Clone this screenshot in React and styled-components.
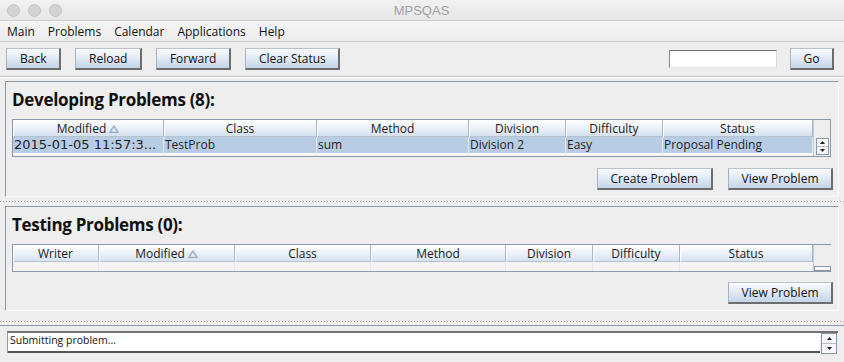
import styled, { createGlobalStyle } from "styled-components";

const Global = createGlobalStyle`
  html, body {
    margin: 0;
    padding: 0;
    background: #eeeeee;
  }
  body {
    font-family: "Open Sans", "DejaVu Sans", sans-serif;
    font-size: 12px;
    color: #1a1a1a;
  }
`;

const Window = styled.div`
  width: 844px;
  height: 362px;
  display: flex;
  flex-direction: column;
  background: #eeeeee;
  overflow: hidden;
`;

const TitleBar = styled.div`
  height: 20px;
  flex: none;
  display: grid;
  grid-template-columns: 1fr auto 1fr;
  align-items: center;
  padding: 0 8px 0 7px;
  background: linear-gradient(#f2f2f2, #e6e6e6);
  border-bottom: 1px solid #cdcdcd;
`;

const Lights = styled.div`
  display: flex;
  gap: 8px;
`;

const Light = styled.span`
  width: 11px;
  height: 11px;
  border-radius: 50%;
  background: #d3d3d3;
  border: 1px solid #c4c4c4;
`;

const Title = styled.div`
  font-family: "Liberation Sans", Arial, sans-serif;
  font-size: 13px;
  color: #a2a2a2;
`;

const MenuBar = styled.div`
  height: 20px;
  flex: none;
  display: flex;
  align-items: center;
  gap: 13px;
  padding-left: 7px;
  background: linear-gradient(#f5f5f5, #ebebeb);
  border-bottom: 1px solid #c9c9c9;
`;

const MenuItem = styled.span`
  font-size: 12px;
  color: #111;
`;

const ToolBar = styled.div`
  flex: none;
  display: flex;
  align-items: center;
  gap: 14px;
  padding: 6px 10px 6px 6px;
  border-bottom: 1px solid #c4c4c4;
  box-shadow: 0 1px 0 #ffffff;
  margin-bottom: 1px;
`;

const Spacer = styled.div`
  flex: 1;
`;

const Button = styled.button`
  height: 22px;
  box-sizing: border-box;
  padding: 0 12.5px 0 13px;
  font-family: "Open Sans", "DejaVu Sans", sans-serif;
  font-size: 12px;
  color: #111;
  background: linear-gradient(#fbfcfe, #dde7f3 55%, #c3d5ea);
  border-top: 1px solid #b9c2cc;
  border-left: 1px solid #aab3bd;
  border-right: 2px solid #6d6d6d;
  border-bottom: 2px solid #6d6d6d;
  border-radius: 0;
  line-height: 18px;
  white-space: nowrap;
`;

const TextField = styled.div`
  width: 108px;
  height: 18px;
  box-sizing: border-box;
  background: #ffffff;
  border-top: 1px solid #6f6f6f;
  border-left: 1px solid #8a8a8a;
  border-right: 1px solid #d8d8d8;
  border-bottom: 1px solid #e2e2e2;
  margin-right: -1px;
`;

const Content = styled.div`
  flex: 1;
  display: flex;
  flex-direction: column;
  padding: 3px 5px 0 5px;
`;

const Panel = styled.section`
  display: flex;
  flex-direction: column;
  padding: 8px 6px 6px 6px;
  border-top: 1px solid #8e99a8;
  border-left: 1px solid #8e99a8;
  border-right: 1px solid #ffffff;
  border-bottom: 1px solid #ffffff;
`;

const Heading = styled.h2`
  margin: 0 0 9px 0;
  height: 20px;
  line-height: 20px;
  font-size: 17px;
  font-weight: 700;
  letter-spacing: -0.3px;
  color: #111;
`;

const TableFrame = styled.div`
  margin-right: 1px;
  display: grid;
  grid-template-columns: ${(p) => p.$cols} 1fr;
  border: 1px solid #8d99a9;
  background: #eeeeee;
`;

const HeadCell = styled.div`
  height: 17px;
  box-sizing: border-box;
  display: flex;
  align-items: center;
  justify-content: center;
  gap: 3px;
  font-size: 12px;
  color: #1a1a1a;
  background: linear-gradient(#ffffff, #e6edf6 60%, #d3dfed);
  border-right: 1px solid #a9b5c3;
  box-shadow: inset 1px 0 0 #ffffff, inset 0 -1px 0 #b7c3d1;
`;

const Corner = styled.div`
  height: 17px;
  background: #eeeeee;
  border-left: 1px solid #c5ccd5;
`;

const BodyCell = styled.div`
  height: ${(p) => p.$h}px;
  box-sizing: border-box;
  padding: 0 1px;
  line-height: 16px;
  font-family: ${(p) =>
    p.$wide ? '"DejaVu Sans", sans-serif' : '"Open Sans", "DejaVu Sans", sans-serif'};
  font-size: ${(p) => (p.$wide ? "13px" : "12px")};
  color: #1e1e1e;
  white-space: nowrap;
  overflow: hidden;
  background: ${(p) => (p.$selected ? "#b8cde4" : "#f4f4f4")};
  border-right: 1px solid #e4e9f0;
  border-bottom: ${(p) => (p.$selected ? "1px solid #ffffff" : "0")};
`;

const ScrollCol = styled.div`
  grid-row: span ${(p) => p.$rows};
  display: flex;
  flex-direction: column;
  align-items: center;
  justify-content: ${(p) => (p.$end ? "flex-end" : "flex-start")};
  padding-top: ${(p) => (p.$end ? 0 : 1)}px;
  background: #eeeeee;
  border-left: 1px solid #c5ccd5;
`;

const SpinBox = styled.div`
  display: flex;
  flex-direction: column;
  width: ${(p) => p.$w}px;
  border: 1px solid #8e99a8;
  background: #f4f6f9;
`;

const SpinBtn = styled.div`
  height: ${(p) => p.$h}px;
  display: flex;
  align-items: center;
  justify-content: center;
  & + & {
    border-top: 1px solid #b8c1cc;
  }
`;

const Actions = styled.div`
  display: flex;
  justify-content: flex-end;
  gap: 15px;
  margin-top: ${(p) => p.$top}px;
  margin-right: -1px;
`;

const Divider = styled.div`
  flex: none;
  height: ${(p) => p.$h}px;
  display: flex;
  flex-direction: column;
  justify-content: ${(p) => (p.$end ? "flex-end" : "center")};
  padding-bottom: ${(p) => (p.$end ? 3 : 0)}px;
  box-sizing: border-box;
  margin: 0 -5px;
  &::before {
    content: "";
    height: 1px;
    background: repeating-linear-gradient(90deg, #9c9c9c 0 1px, transparent 1px 3px);
  }
`;

const StatusPane = styled.div`
  margin: 0 -5px;
  padding: 5px 6px 0 7px;
  border-top: 1px solid #8e99a8;
  display: flex;
`;

const StatusArea = styled.div`
  flex: 1;
  height: 22px;
  box-sizing: border-box;
  display: flex;
  background: #ffffff;
  border-top: 2px solid #727272;
  border-left: 1px solid #9a9a9a;
`;

const StatusText = styled.div`
  flex: 1;
  padding-left: 2px;
  font-size: 10.5px;
  line-height: 15px;
  color: #111;
  border-bottom: 2px solid #555555;
`;

const StatusSpin = styled.div`
  width: 18px;
  display: flex;
  align-items: flex-start;
  justify-content: center;
  background: #eeeeee;
`;

function SortArrow() {
  return (
    <svg width="10" height="8" viewBox="0 0 10 8">
      <polygon points="5,0.5 9.5,7.5 0.5,7.5" fill="#b9cadf" stroke="#8fa3bd" strokeWidth="1" />
      <polygon points="5,3 7.2,6.5 2.8,6.5" fill="#e9f0f8" />
    </svg>
  );
}

function Arrow({ up }) {
  return (
    <svg width="5" height="3" viewBox="0 0 5 3">
      <polygon points={up ? "2.5,0 5,3 0,3" : "0,0 5,0 2.5,3"} fill="#222" />
    </svg>
  );
}

function Spinner({ width, height }) {
  return (
    <SpinBox $w={width}>
      <SpinBtn $h={height}>
        <Arrow up />
      </SpinBtn>
      <SpinBtn $h={height}>
        <Arrow />
      </SpinBtn>
    </SpinBox>
  );
}

function Header({ label, sorted }) {
  return (
    <HeadCell>
      {label}
      {sorted && <SortArrow />}
    </HeadCell>
  );
}

const devColumns = [
  { label: "Modified", width: 151, sorted: true },
  { label: "Class", width: 153 },
  { label: "Method", width: 152 },
  { label: "Division", width: 97 },
  { label: "Difficulty", width: 97 },
  { label: "Status", width: 150 },
];

const devRow = [
  "2015-01-05 11:57:3...",
  "TestProb",
  "sum",
  "Division 2",
  "Easy",
  "Proposal Pending",
];

const testColumns = [
  { label: "Writer", width: 86 },
  { label: "Modified", width: 136, sorted: true },
  { label: "Class", width: 136 },
  { label: "Method", width: 135 },
  { label: "Division", width: 87 },
  { label: "Difficulty", width: 87 },
  { label: "Status", width: 133 },
];

const colTemplate = (cols) => cols.map((c) => `${c.width}px`).join(" ");

export default function App() {
  return (
    <>
      <Global />
      <Window>
        <TitleBar>
          <Lights>
            <Light />
            <Light />
            <Light />
          </Lights>
          <Title>MPSQAS</Title>
          <div />
        </TitleBar>

        <MenuBar>
          {["Main", "Problems", "Calendar", "Applications", "Help"].map((m) => (
            <MenuItem key={m}>{m}</MenuItem>
          ))}
        </MenuBar>

        <ToolBar>
          <Button>Back</Button>
          <Button>Reload</Button>
          <Button>Forward</Button>
          <Button>Clear Status</Button>
          <Spacer />
          <TextField />
          <Button>Go</Button>
        </ToolBar>

        <Content>
          <Panel>
            <Heading>Developing Problems (8):</Heading>
            <TableFrame $cols={colTemplate(devColumns)}>
              {devColumns.map((c) => (
                <Header key={c.label} label={c.label} sorted={c.sorted} />
              ))}
              <Corner />
              {devRow.map((v, i) => (
                <BodyCell key={v} $h={17} $selected $wide={i === 0}>
                  {v}
                </BodyCell>
              ))}
              <ScrollCol $rows={2}>
                <Spinner width={11} height={7} />
              </ScrollCol>
              {devRow.map((v) => (
                <BodyCell key={v} $h={2} />
              ))}
            </TableFrame>
            <Actions $top={11}>
              <Button>Create Problem</Button>
              <Button>View Problem</Button>
            </Actions>
          </Panel>

          <Divider $h={9} />

          <Panel>
            <Heading>Testing Problems (0):</Heading>
            <TableFrame $cols={colTemplate(testColumns)}>
              {testColumns.map((c) => (
                <Header key={c.label} label={c.label} sorted={c.sorted} />
              ))}
              <Corner />
              {testColumns.map((c) => (
                <BodyCell key={c.label} $h={9} />
              ))}
              <ScrollCol $rows={1} $end>
                <SpinBox $w={15}>
                  <SpinBtn $h={3} />
                </SpinBox>
              </ScrollCol>
            </TableFrame>
            <Actions $top={10}>
              <Button>View Problem</Button>
            </Actions>
          </Panel>

          <Divider $h={14} $end />

          <StatusPane>
            <StatusArea>
              <StatusText>Submitting problem...</StatusText>
              <StatusSpin>
                <Spinner width={14} height={9} />
              </StatusSpin>
            </StatusArea>
          </StatusPane>
        </Content>
      </Window>
    </>
  );
}
